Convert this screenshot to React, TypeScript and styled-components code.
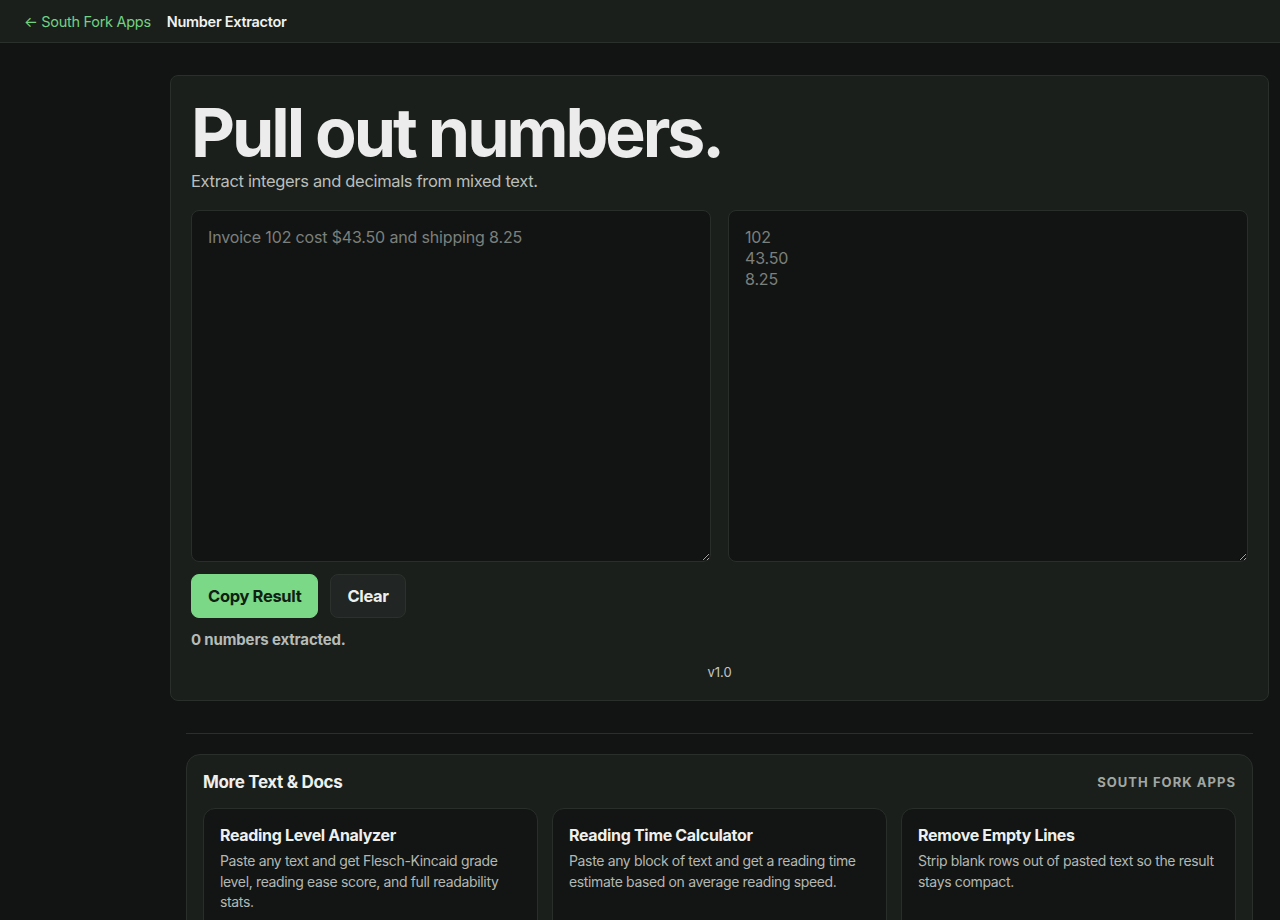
import styled, { createGlobalStyle } from 'styled-components';
import { useState } from 'react';

const GlobalStyle = createGlobalStyle`
  html, body {
    margin: 0;
    background: #121413;
    color: #ecefec;
    font-family: Inter, "Noto Sans", sans-serif;
  }
  * { box-sizing: border-box; }
`;

const TopBar = styled.header`
  display: flex;
  align-items: center;
  gap: 16px;
  height: 43px;
  padding: 0 24px;
  background: #1b1f1c;
  border-bottom: 1px solid #2a302b;
`;

const BackLink = styled.a`
  color: #72d283;
  font-size: 14.5px;
  letter-spacing: -0.02em;
  text-decoration: none;
`;

const CurrentApp = styled.span`
  color: #f0f2f0;
  font-size: 14.5px;
  font-weight: 600;
  letter-spacing: -0.02em;
`;

const Main = styled.main`
  padding: 32px 11px 0 170px;
`;

const ToolCard = styled.section`
  background: #1b1f1c;
  border: 1px solid #2a2f2b;
  border-radius: 8px;
  padding: 17px 20px 20px;
`;

const Title = styled.h1`
  margin: 0;
  font-size: 68px;
  line-height: 78px;
  font-weight: 700;
  letter-spacing: -0.045em;
  color: #ebeceb;
`;

const Subtitle = styled.p`
  margin: 0 0 19px;
  font-size: 16.5px;
  line-height: 20px;
  color: #b9beba;
  letter-spacing: -0.02em;
`;

const Panes = styled.div`
  display: grid;
  grid-template-columns: 1fr 1fr;
  gap: 17px;
`;

const TextBox = styled.textarea`
  height: 352px;
  width: 100%;
  resize: vertical;
  background: #121413;
  border: 1px solid #2a2e2b;
  border-radius: 8px;
  padding: 16px;
  color: #dfe2df;
  font-family: Inter, "Noto Sans", sans-serif;
  font-size: 16px;
  line-height: 21px;
  letter-spacing: -0.01em;
  outline: none;
  &::placeholder { color: #7b807c; }
`;

const Actions = styled.div`
  display: flex;
  gap: 12px;
  margin-top: 12px;
`;

const Button = styled.button<{ $primary?: boolean }>`
  height: 44px;
  padding: 0 16px;
  border-radius: 8px;
  font-family: Inter, "Noto Sans", sans-serif;
  font-size: 16.5px;
  font-weight: 700;
  letter-spacing: -0.02em;
  cursor: pointer;
  background: ${p => (p.$primary ? '#7ad887' : '#212523')};
  color: ${p => (p.$primary ? '#102012' : '#eef0ee')};
  border: 1px solid ${p => (p.$primary ? '#7ad887' : '#2c312d')};
`;

const Status = styled.div`
  margin-top: 12px;
  font-size: 15px;
  font-weight: 700;
  color: #b6bbb7;
  letter-spacing: -0.01em;
`;

const Version = styled.div`
  margin-top: 15px;
  text-align: center;
  font-size: 13px;
  color: #c2c6c2;
`;

const Divider = styled.hr`
  margin: 32px 16px 20px;
  border: none;
  border-top: 1px solid #28302b;
`;

const MoreSection = styled.section`
  margin: 0 16px;
  background: #1b1f1c;
  border: 1px solid #2a2f2b;
  border-radius: 14px;
  padding: 17px 16px 16px;
`;

const MoreHeader = styled.div`
  display: flex;
  justify-content: space-between;
  align-items: center;
  margin-bottom: 16px;
`;

const MoreTitle = styled.h2`
  margin: 0;
  font-size: 17px;
  font-weight: 700;
  letter-spacing: -0.02em;
  color: #eef0ee;
`;

const Brand = styled.span`
  font-size: 13px;
  font-weight: 700;
  letter-spacing: 0.08em;
  color: #a2a7a3;
`;

const CardGrid = styled.div`
  display: grid;
  grid-template-columns: repeat(3, 1fr);
  gap: 14px;
`;

const AppCard = styled.a`
  display: block;
  background: #121513;
  border: 1px solid #2a2e2b;
  border-radius: 12px;
  padding: 16px 16px 20px;
  min-height: 130px;
  text-decoration: none;
`;

const AppName = styled.div`
  font-size: 16px;
  font-weight: 700;
  letter-spacing: -0.02em;
  color: #eef0ee;
  margin-bottom: 6px;
`;

const AppDesc = styled.div`
  font-size: 14px;
  line-height: 20.5px;
  color: #b3b8b4;
  letter-spacing: -0.025em;
`;

const related = [
  {
    name: 'Reading Level Analyzer',
    desc: 'Paste any text and get Flesch-Kincaid grade level, reading ease score, and full readability stats.',
  },
  {
    name: 'Reading Time Calculator',
    desc: 'Paste any block of text and get a reading time estimate based on average reading speed.',
  },
  {
    name: 'Remove Empty Lines',
    desc: 'Strip blank rows out of pasted text so the result stays compact.',
  },
];

const App = () => {
  const [input, setInput] = useState('');
  const numbers = input.match(/-?\d+(?:\.\d+)?/g) || [];

  return (
    <>
      <GlobalStyle />
      <TopBar>
        <BackLink href="#">← South Fork Apps</BackLink>
        <CurrentApp>Number Extractor</CurrentApp>
      </TopBar>
      <Main>
        <ToolCard>
          <Title>Pull out numbers.</Title>
          <Subtitle>Extract integers and decimals from mixed text.</Subtitle>
          <Panes>
            <TextBox
              placeholder="Invoice 102 cost $43.50 and shipping 8.25"
              value={input}
              onChange={e => setInput(e.target.value)}
            />
            <TextBox readOnly placeholder={'102\n43.50\n8.25'} value={numbers.join('\n')} />
          </Panes>
          <Actions>
            <Button $primary>Copy Result</Button>
            <Button onClick={() => setInput('')}>Clear</Button>
          </Actions>
          <Status>{numbers.length} numbers extracted.</Status>
          <Version>v1.0</Version>
        </ToolCard>
        <Divider />
        <MoreSection>
          <MoreHeader>
            <MoreTitle>More Text &amp; Docs</MoreTitle>
            <Brand>SOUTH FORK APPS</Brand>
          </MoreHeader>
          <CardGrid>
            {related.map(app => (
              <AppCard href="#" key={app.name}>
                <AppName>{app.name}</AppName>
                <AppDesc>{app.desc}</AppDesc>
              </AppCard>
            ))}
          </CardGrid>
        </MoreSection>
      </Main>
    </>
  );
};

export default App;
